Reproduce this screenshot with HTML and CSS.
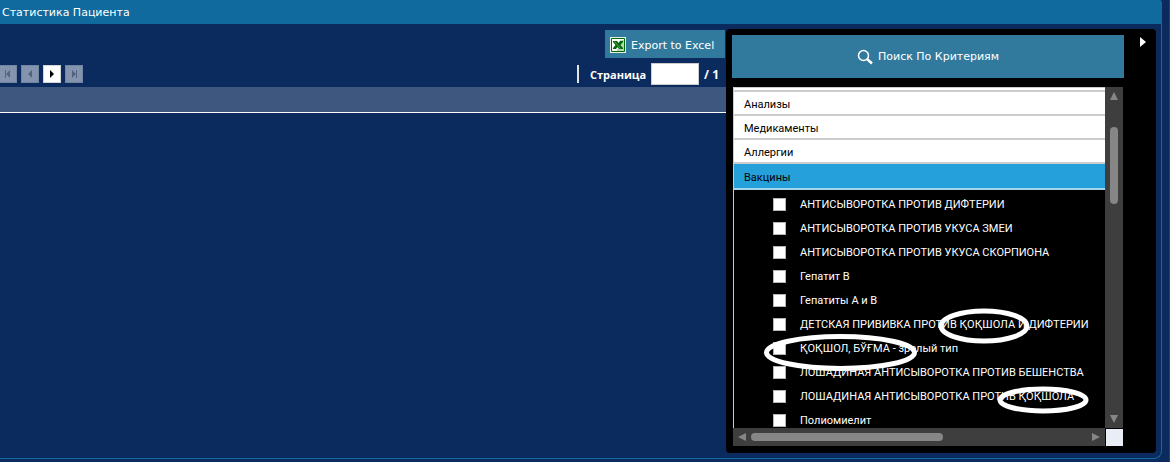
FILE: index.html
```html
<!DOCTYPE html>
<html lang="ru">
<head>
<meta charset="utf-8">
<title>Статистика Пациента</title>
<link rel="stylesheet" href="styles.css">
</head>
<body>
<main class="window">
  <h1 class="titlebar">Статистика Пациента</h1>
  <div class="content">
    <section class="report">
      <div class="export-row">
        <button class="action export" type="button">
          <svg width="16" height="16" viewBox="0 0 16 16" aria-hidden="true"><path fill="#e4f0dc" d="M0 0h16v16H0z"/><path fill="#fff" stroke="#006a0a" d="M1.5 1.5h13v13h-13z"/><path fill="#b9d8b2" d="M10 3h4v11h-7v-2h5z"/><path fill="#006a0a" d="M3 4h4l1.500 2L10 4h3v1l-2.500 3L13 11v1H9L7.500 10 6 12H3v-1l2.500-3L3 5z"/><path stroke="#5fa05c" d="M4.500 4.500l6 7"/></svg>
          <span>Export to Excel</span>
        </button>
      </div>
      <div class="pager">
        <div class="pager-buttons">
          <button class="page-btn first" type="button" aria-label="Первая" disabled><svg width="8" height="8" viewBox="0 0 8 8"><path d="M1 0h1v8H1zM6 0v8L2 4z"/></svg></button>
          <button class="page-btn" type="button" aria-label="Предыдущая" disabled><svg width="8" height="8" viewBox="0 0 8 8"><path d="M6 0v8L2 4z"/></svg></button>
          <button class="page-btn" type="button" aria-label="Следующая"><svg width="8" height="8" viewBox="0 0 8 8"><path d="M2 0v8l4-4z"/></svg></button>
          <button class="page-btn" type="button" aria-label="Последняя" disabled><svg width="8" height="8" viewBox="0 0 8 8"><path d="M2 0v8l4-4zM6 0h1v8H6z"/></svg></button>
        </div>
        <div class="page-pick">
          <span class="divider"></span>
          <label for="page">Страница</label>
          <input id="page" type="text">
          <span class="total">/ 1</span>
        </div>
      </div>
      <div class="grid-head"></div>
    </section>
    <aside class="criteria">
      <div class="criteria-main">
        <button class="action search" type="button">
          <svg width="16" height="16" viewBox="0 0 16 16" fill="none" stroke="#fff" aria-hidden="true"><circle cx="6.500" cy="6.500" r="5" stroke-width="1.500"/><path stroke-width="2.500" d="M10 10l5 4.500"/></svg>
          <span>Поиск По Критериям</span>
        </button>
        <div class="scroller">
          <div class="viewport">
            <div class="strip"></div>
            <button class="group" type="button">Анализы</button>
            <button class="group" type="button">Медикаменты</button>
            <button class="group" type="button">Аллергии</button>
            <button class="group selected" type="button">Вакцины</button>
            <div class="options">
              <label><input type="checkbox">АНТИСЫВОРОТКА ПРОТИВ ДИФТЕРИИ</label>
              <label><input type="checkbox">АНТИСЫВОРОТКА ПРОТИВ УКУСА ЗМЕИ</label>
              <label><input type="checkbox">АНТИСЫВОРОТКА ПРОТИВ УКУСА СКОРПИОНА</label>
              <label><input type="checkbox">Гепатит В</label>
              <label><input type="checkbox">Гепатиты А и В</label>
              <label><input type="checkbox">ДЕТСКАЯ ПРИВИВКА ПРОТИВ ҚОҚШОЛА И ДИФТЕРИИ</label>
              <label><input type="checkbox">ҚОҚШОЛ, БЎҒМА - зрелый тип</label>
              <label><input type="checkbox">ЛОШАДИНАЯ АНТИСЫВОРОТКА ПРОТИВ БЕШЕНСТВА</label>
              <label><input type="checkbox">ЛОШАДИНАЯ АНТИСЫВОРОТКА ПРОТИВ ҚОҚШОЛА</label>
              <label><input type="checkbox">Полиомиелит</label>
            </div>
            <svg class="marks" width="372" height="341" viewBox="0 0 372 341" fill="none" stroke="#fff" aria-hidden="true">
              <ellipse cx="251" cy="239" rx="43" ry="15" stroke-width="5"/>
              <ellipse cx="107.500" cy="265.500" rx="74" ry="16" stroke-width="5"/>
              <ellipse cx="310" cy="313" rx="43" ry="11" stroke-width="5"/>
            </svg>
          </div>
          <div class="bar vertical">
            <svg width="8" height="8" viewBox="0 0 8 8"><path d="M4 0l4 8H0z"/></svg>
            <span class="thumb"></span>
            <svg width="8" height="8" viewBox="0 0 8 8"><path d="M0 0h8L4 8z"/></svg>
          </div>
          <div class="bar horizontal">
            <svg width="8" height="8" viewBox="0 0 8 8"><path d="M8 0v8L0 4z"/></svg>
            <span class="thumb"></span>
            <svg width="8" height="8" viewBox="0 0 8 8"><path d="M0 0v8l8-4z"/></svg>
          </div>
          <div class="corner"></div>
        </div>
      </div>
      <button class="collapse" type="button" aria-label="Свернуть"><svg width="6" height="10" viewBox="0 0 6 10"><path fill="#fff" d="M0 0v10l6-5z"/></svg></button>
    </aside>
  </div>
</main>
</body>
</html>
```
FILE: styles.css
```css
* {
  box-sizing: border-box;
}

body {
  margin: 0;
  height: 100vh;
  padding: 0 7px 3px 0;
  border-right: 1px solid #4b2a7d;
  background: #0b2a5e;
  color: #fff;
  font-family: Verdana, "DejaVu Sans", sans-serif;
  font-size: 11px;
}

button {
  border: 0;
  padding: 0;
  font: inherit;
  color: inherit;
}

.window {
  display: flex;
  flex-direction: column;
  height: 100%;
  border: solid #106a9d;
  border-width: 0 1px 1px 0;
  border-radius: 0 3px 8px 0;
}

.titlebar {
  margin: 0;
  padding: 1px 2px 0;
  background: #106a9d;
  font-size: 11px;
  font-weight: 400;
  line-height: 23px;
}

.content {
  display: flex;
  flex: 1;
  min-height: 0;
  padding: 5px 5px 5px 0;
}

.report {
  flex: 1;
  min-width: 0;
}

.action {
  display: flex;
  align-items: center;
  justify-content: center;
  background: #317a9d;
}

.export-row {
  display: flex;
  justify-content: flex-end;
  padding: 1px 1px 0 0;
}

.export {
  justify-content: flex-start;
  gap: 5px;
  width: 120px;
  height: 28px;
  padding: 2px 5px 0;
}

.pager {
  display: flex;
  align-items: center;
  justify-content: space-between;
  height: 29px;
  padding-top: 3px;
}

.pager-buttons {
  display: flex;
  gap: 4px;
}

.page-btn {
  display: flex;
  align-items: center;
  justify-content: center;
  width: 18px;
  height: 18px;
  border: 1px solid #d5d5d5;
  background: #fff;
  fill: #000;
}

.page-btn:disabled {
  border-color: #7184a1;
  background: #8594ae;
  fill: #53647f;
}

.page-btn.first {
  width: 17px;
  border-left: 0;
}

.page-pick {
  display: flex;
  align-items: center;
  gap: 5px;
  padding-right: 7px;
  font-family: Tahoma, "Open Sans", sans-serif;
  font-weight: 700;
}

.total {
  font-size: 12px;
}

.divider {
  width: 2px;
  height: 18px;
  margin-right: 6px;
  background: #e4e4e4;
}

.page-pick input {
  width: 48px;
  height: 22px;
  border: 1px solid #ccc;
  background: #fff;
}

.grid-head {
  height: 26px;
  border-bottom: 1px solid #fff;
  background: #3d577e;
}

.criteria {
  display: flex;
  width: 430px;
  padding: 6px;
  border-radius: 4px;
  background: #000;
}

.criteria-main {
  display: flex;
  flex-direction: column;
  gap: 9px;
  width: 392px;
}

.search {
  gap: 5px;
  flex: none;
  height: 43px;
}

.scroller {
  display: grid;
  flex: 1;
  min-height: 0;
  grid-template-columns: 1fr 18px;
  grid-template-rows: minmax(0, 1fr) 18px;
  margin: 0 1px 1px;
}

.viewport {
  position: relative;
  overflow: hidden;
  border-left: 1px solid #ccc;
  font-family: "Segoe UI", Roboto, sans-serif;
}

.strip {
  height: 5px;
  border: solid #ccc;
  border-width: 1px 0 2px;
  background: #fff;
}

.group {
  display: block;
  width: 100%;
  height: 24px;
  padding: 2px 0 0 10px;
  border-bottom: 2px solid #ccc;
  background: #fff;
  color: #000;
  text-align: left;
}

.group.selected {
  height: 26px;
  border-color: #a5d5ec;
  background: #26a0da;
}

.options {
  padding: 2px 0 0 39px;
}

.options label {
  display: flex;
  align-items: center;
  gap: 14px;
  height: 24px;
  white-space: nowrap;
}

.options input {
  appearance: none;
  width: 13px;
  height: 13px;
  margin: 0;
  border: 1px solid #b4b4b4;
  background: #fff;
}

.marks {
  position: absolute;
  top: 0;
  left: -1px;
}

.bar {
  display: flex;
  align-items: center;
  background: #3e3e3e;
  fill: #868686;
}

.vertical {
  flex-direction: column;
  padding: 5px 0;
}

.horizontal {
  padding: 0 5px;
}

.thumb {
  border-radius: 4px;
  background: #868686;
}

.vertical .thumb {
  width: 8px;
  height: 77px;
  margin: 27px 0 auto;
}

.horizontal .thumb {
  width: 192px;
  height: 8px;
  margin: 0 auto 0 5px;
}

.corner {
  margin: 1px 0 0 1px;
  background: #e8edf6;
}

.collapse {
  display: flex;
  align-items: center;
  align-self: flex-start;
  height: 14px;
  margin-left: 16px;
  background: none;
}
```
